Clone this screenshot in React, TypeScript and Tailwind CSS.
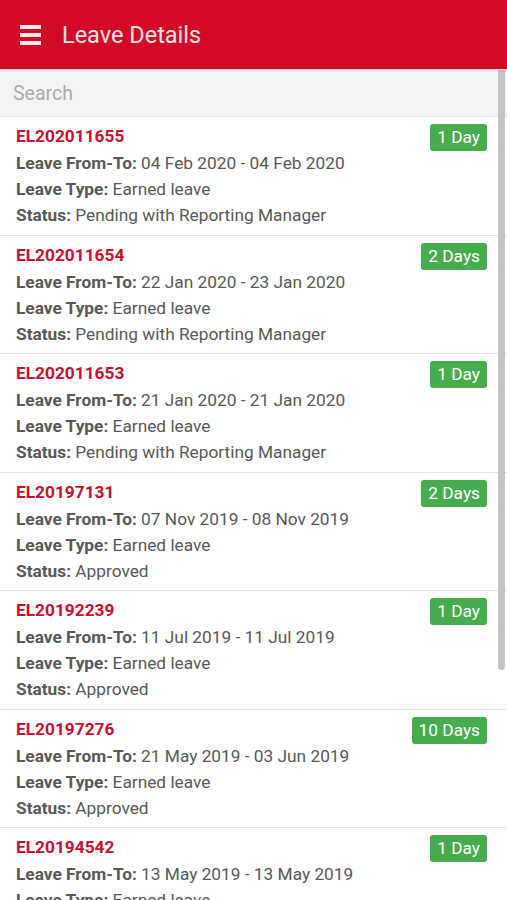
import React from "react";

const items = [
  { id: "EL202011655", days: "1 Day", from: "04 Feb 2020 - 04 Feb 2020", status: "Pending with Reporting Manager" },
  { id: "EL202011654", days: "2 Days", from: "22 Jan 2020 - 23 Jan 2020", status: "Pending with Reporting Manager" },
  { id: "EL202011653", days: "1 Day", from: "21 Jan 2020 - 21 Jan 2020", status: "Pending with Reporting Manager" },
  { id: "EL20197131", days: "2 Days", from: "07 Nov 2019 - 08 Nov 2019", status: "Approved" },
  { id: "EL20192239", days: "1 Day", from: "11 Jul 2019 - 11 Jul 2019", status: "Approved" },
  { id: "EL20197276", days: "10 Days", from: "21 May 2019 - 03 Jun 2019", status: "Approved" },
  { id: "EL20194542", days: "1 Day", from: "13 May 2019 - 13 May 2019", status: "Approved" },
];

export default function App() {
  return (
    <div className="w-[507px] h-[900px] overflow-hidden bg-white" style={{ fontFamily: "Roboto, 'Noto Sans', sans-serif" }}>
      <div className="h-[69px] bg-[#d20a25] flex items-center pl-[20px] shadow-[0_1px_2px_rgba(0,0,0,0.2)] relative z-10">
        <div className="flex flex-col gap-[4px] w-[21px]">
          <div className="h-[4px] bg-[#fde8ec]" />
          <div className="h-[4px] bg-[#fde8ec]" />
          <div className="h-[4px] bg-[#fde8ec]" />
        </div>
        <div className="ml-[21px] text-[23.5px] text-[#fbe1e6] leading-none mt-[2px]">Leave Details</div>
      </div>
      <div className="relative">
        <div className="absolute right-[2px] top-[1px] w-[7px] h-[600px] bg-[#c4c4c4] rounded-b-[3px]" />
        <div className="h-[48px] bg-[#f4f4f4] flex items-center pl-[13px] text-[19.5px] text-[#ababab] border-b border-[#e6e6e6]">
          <span className="mt-[2px]">Search</span>
        </div>
        {items.map((it) => (
          <div key={it.id} className="h-[118.5px] border-b border-[#e3e3e3] pl-[16px] pr-[20px] pt-[6px] flex justify-between">
            <div className="text-[17.3px] text-[#585858]">
              <div className="h-[27px] leading-[27px] font-bold text-[#c8102e]">{it.id}</div>
              <div className="h-[26px] leading-[26px]"><span className="font-bold">Leave From-To:</span> {it.from}</div>
              <div className="h-[26px] leading-[26px]"><span className="font-bold">Leave Type:</span> Earned leave</div>
              <div className="h-[26px] leading-[26px]"><span className="font-bold">Status:</span> {it.status}</div>
            </div>
            <div className="mt-[1px] h-[27px] px-[7px] rounded-[3px] bg-[#47ac4e] text-white text-[17.3px] leading-[27px] self-start">
              {it.days}
            </div>
          </div>
        ))}
      </div>
    </div>
  );
}
